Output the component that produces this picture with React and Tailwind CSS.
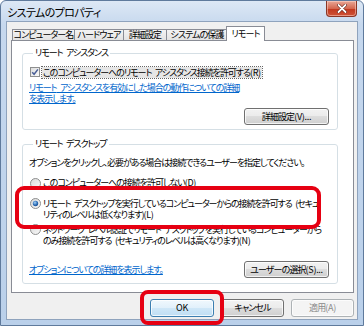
import React from "react";

const FONT = "font-['Noto_Sans_CJK_JP','Noto_Sans',sans-serif] [font-feature-settings:'palt']";

function A({ children }) {
  return <span className="tracking-[-0.3px]">{children}</span>;
}

const SP = "\u2002";

function Btn({ children, kind = "normal", className = "" }) {
  const kinds = {
    normal:
      "border-[#707070] bg-[linear-gradient(#f2f2f2_0%,#ebebeb_50%,#dddddd_50%,#cfcfcf_100%)] text-black",
    default:
      "border-[#3c7fb1] bg-[linear-gradient(#f0f8fd_0%,#e1f0fb_50%,#cfe7f8_50%,#bfdef4_100%)] text-black",
    disabled: "border-[#adb2b5] bg-[#f4f4f4] text-[#8a8a8a]",
  };
  return (
    <div
      className={`flex items-center justify-center whitespace-nowrap rounded-[3px] border text-[9px] leading-[12px] tracking-[-0.9px] shadow-[inset_0_0_0_1px_rgba(255,255,255,0.75)] ${kinds[kind]} ${className}`}
    >
      {children}
    </div>
  );
}

function Checkbox() {
  return (
    <svg width="10" height="10" viewBox="0 0 10 10" className="shrink-0">
      <defs>
        <linearGradient id="cbg" x1="0" y1="0" x2="1" y2="1">
          <stop offset="0" stopColor="#dcdcdc" />
          <stop offset="1" stopColor="#fbfbfb" />
        </linearGradient>
      </defs>
      <rect x="0.5" y="0.5" width="9" height="9" fill="url(#cbg)" stroke="#8e8f8f" />
      <path d="M2.2 5.2 L4.1 7.3 L7.9 2.4" fill="none" stroke="#4a5f97" strokeWidth="1.5" />
    </svg>
  );
}

function Radio({ checked }) {
  return (
    <svg width="11" height="11" viewBox="0 0 11 11" className="shrink-0">
      <defs>
        <linearGradient id="rbg" x1="0" y1="0" x2="1" y2="1">
          <stop offset="0" stopColor="#d8d8d8" />
          <stop offset="1" stopColor="#fafafa" />
        </linearGradient>
        <radialGradient id="rdot" cx="0.4" cy="0.35" r="0.7">
          <stop offset="0" stopColor="#a8d4f6" />
          <stop offset="0.6" stopColor="#2f6fb8" />
          <stop offset="1" stopColor="#1d4c8c" />
        </radialGradient>
      </defs>
      <circle cx="5.5" cy="5.5" r="5" fill="url(#rbg)" stroke="#8e8f8f" />
      {checked && <circle cx="5.5" cy="5.5" r="2.7" fill="url(#rdot)" />}
    </svg>
  );
}

function Tab({ children, selected, className = "" }) {
  if (selected) {
    return (
      <div
        className={`relative z-10 -mb-px flex h-[15px] items-center justify-center whitespace-nowrap border border-b-0 border-[#898c95] bg-white text-[9px] leading-[12px] tracking-[-0.9px] ${className}`}
      >
        {children}
      </div>
    );
  }
  return (
    <div
      className={`flex h-[11px] items-center justify-center whitespace-nowrap border border-b-0 border-[#898c95] bg-[linear-gradient(#f3f3f3,#e3e3e3)] text-[9px] leading-[12px] tracking-[-0.9px] ${className}`}
    >
      {children}
    </div>
  );
}

const T = "text-[9px] tracking-[-1.05px] whitespace-nowrap";

export default function App() {
  return (
    <div
      className={`relative flex h-[326px] w-[364px] flex-col overflow-hidden rounded-t-[6px] border border-[#5f7a9c] bg-[linear-gradient(#dde8f5,#c6d8ee_24px,#bad0ea)] text-black ${FONT}`}
    >
      {/* title bar */}
      <div className="flex h-[20px] shrink-0 items-start justify-between">
        <div className="pl-[6px] pt-[4px] text-[11px] leading-[14px] tracking-[-0.6px] text-black">
          システムのプロパティ
        </div>
        <div className="mr-[6px] flex h-[16px] w-[31px] items-center justify-center rounded-b-[4px] border border-t-0 border-[#8a3626] bg-[linear-gradient(#e9a897,#d4674f_50%,#c2391f_55%,#cf5337)] shadow-[inset_0_0_0_1px_rgba(255,220,210,0.5)]">
          <svg width="10" height="9" viewBox="0 0 10 9">
            <path d="M1.5 1 L8.5 8 M8.5 1 L1.5 8" stroke="#5a1a10" strokeWidth="3" strokeLinecap="round" />
            <path d="M1.5 1 L8.5 8 M8.5 1 L1.5 8" stroke="#ffffff" strokeWidth="1.8" strokeLinecap="round" />
          </svg>
        </div>
      </div>

      {/* client area */}
      <div className="mx-[5px] flex h-[299px] shrink-0 flex-col border border-[#8fa3bd] bg-[#f0f0f0] pl-[4px] pr-[3px] pt-[4px]">
        {/* tabs */}
        <div className="flex h-[14px] shrink-0 items-end pl-[1px]">
          <Tab className="w-[63px]">コンピューター名</Tab>
          <Tab className="-ml-px w-[50px]">ハードウェア</Tab>
          <Tab className="-ml-px w-[44px]">詳細設定</Tab>
          <Tab className="-ml-px w-[62px]">システムの保護</Tab>
          <Tab selected className="-ml-[2px] w-[39px]">リモート</Tab>
        </div>

        {/* panel */}
        <div className="flex h-[253px] w-[343px] shrink-0 flex-col border border-[#898c95] bg-white">
          {/* group 1 */}
          <fieldset className="ml-[10px] mt-[6px] w-[316px] rounded-[3px] border border-[#d5dfe5] px-[6px] pb-[4px]">
            <legend className={`ml-[4px] px-[2px] leading-[12px] ${T}`}>
              リモート{SP}アシスタンス
            </legend>
            <div className="mt-[7px] flex h-[12px] items-center gap-[1px] pl-[1px]">
              <Checkbox />
              <span className={`ml-[1px] bg-[#e6e6e6] px-[1px] leading-[11px] outline-1 outline-dotted outline-[#666] ${T}`}>
                このコンピューターへのリモート{SP}アシスタンス接続を許可する<A>(R)</A>
              </span>
            </div>
            <div className={`mt-[4px] leading-[11px] text-[#0066cc] underline ${T}`}>
              リモート{SP}アシスタンスを有効にした場合の動作についての詳細
              <br />
              を表示します。
            </div>
            <div className="mt-[4px] flex justify-end pr-[2px]">
              <Btn className="h-[17px] w-[85px]">詳細設定<A>(V)...</A></Btn>
            </div>
          </fieldset>

          {/* group 2 */}
          <fieldset className="ml-[10px] mt-[8px] w-[316px] rounded-[3px] border border-[#d5dfe5] px-[6px] pb-[5px]">
            <legend className={`ml-[4px] px-[2px] leading-[12px] ${T}`}>
              リモート{SP}デスクトップ
            </legend>
            <div className={`mt-[7px] leading-[12px] ${T}`}>
              オプションをクリックし、必要がある場合は接続できるユーザーを指定してください。
            </div>
            <div className="mt-[8px] flex h-[12px] items-center gap-[2px] pl-[1px]">
              <Radio />
              <span className={`leading-[12px] ${T}`}>
                このコンピューターへの接続を許可しない<A>(D)</A>
              </span>
            </div>
            <div className="mt-[9px] flex items-start gap-[2px] pl-[1px]">
              <Radio checked />
              <span className={`leading-[11px] ${T}`}>
                リモート{SP}デスクトップを実行しているコンピューターからの接続を許可する{SP}(セキュ
                <br />
                リティのレベルは低くなります)<A>(L)</A>
              </span>
            </div>
            <div className="mt-[4px] flex items-start gap-[2px] pl-[1px]">
              <Radio />
              <span className={`leading-[11px] ${T}`}>
                ネットワーク{SP}レベル認証でリモート{SP}デスクトップを実行しているコンピューターから
                <br />
                のみ接続を許可する{SP}(セキュリティのレベルは高くなります)<A>(N)</A>
              </span>
            </div>
            <div className="mt-[15px] flex items-center justify-between pr-[2px]">
              <span className={`leading-[12px] text-[#0066cc] underline ${T}`}>
                オプションについての詳細を表示します。
              </span>
              <Btn className="h-[17px] w-[85px]">ユーザーの選択<A>(S)...</A></Btn>
            </div>
          </fieldset>
        </div>

        {/* bottom buttons */}
        <div className="mt-[6px] flex w-[343px] justify-end gap-[7px]">
          <Btn kind="default" className="h-[18px] w-[64px]"><A>OK</A></Btn>
          <Btn className="h-[18px] w-[63px]">キャンセル</Btn>
          <Btn kind="disabled" className="h-[18px] w-[63px]">適用<A>(A)</A></Btn>
        </div>
      </div>

      {/* red highlight overlays */}
      <div className="pointer-events-none absolute left-[14px] top-[185px] h-[43px] w-[306px] rounded-[9px] border-[4px] border-[#e60012]" />
      <div className="pointer-events-none absolute left-[139px] top-[289px] h-[35px] w-[84px] rounded-[8px] border-[4px] border-[#e60012]" />
    </div>
  );
}
